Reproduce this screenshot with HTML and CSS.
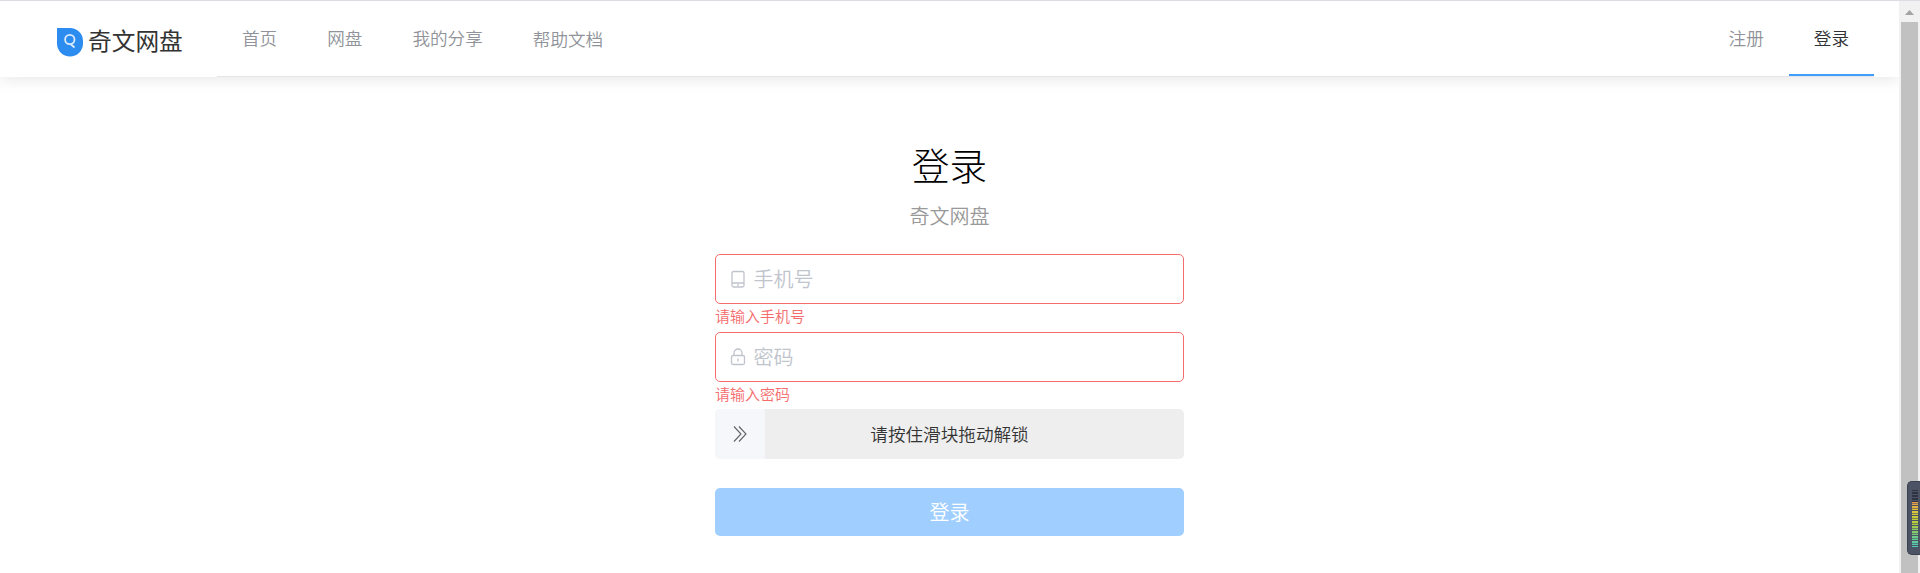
FILE: index.html
```
<!DOCTYPE html>
<html lang="zh-CN">
<head>
<meta charset="utf-8">
<title>奇文网盘</title>
<link rel="stylesheet" href="styles.css">
</head>
<body>
<div class="page">
  <header class="header">
    <div class="logo">
      <svg class="logo-mark" viewBox="0 0 26 29"><path d="M0 0H13A13 13 0 0 1 26 13V15.500A13 13 0 0 1 0 15.500Z" fill="#2d8cf0"/><circle cx="12.800" cy="11.500" r="4.700" fill="none" stroke="#dbeaff" stroke-width="1.800"/><path d="M13.500 16L17.500 19.500" stroke="#dbeaff" stroke-width="1.800"/></svg>
      <span class="logo-text">奇文网盘</span>
    </div>
    <nav class="menu">
      <a class="item">首页</a>
      <a class="item">网盘</a>
      <a class="item">我的分享</a>
      <a class="item item-doc">帮助文档</a>
      <span class="spacer"></span>
      <a class="item">注册</a>
      <a class="item active">登录</a>
    </nav>
  </header>
  <main class="login">
    <h1 class="title">登录</h1>
    <p class="subtitle">奇文网盘</p>
    <div class="field">
      <svg class="icon" viewBox="0 0 16 18"><rect x="2" y="1.500" width="12" height="15.500" rx="1.500"/><path d="M2 13H14M7.200 15H8.800"/></svg>
      <span>手机号</span>
    </div>
    <p class="error">请输入手机号</p>
    <div class="field">
      <svg class="icon" viewBox="0 0 16 18"><rect x="1.500" y="7.500" width="13" height="9" rx="1.500"/><path d="M4 7.500V5A4 4 0 0 1 12 5V7.500M8 10.500V13.500"/></svg>
      <span>密码</span>
    </div>
    <p class="error">请输入密码</p>
    <div class="slider">
      <span class="handle"><svg class="arrows" viewBox="0 0 16 16"><path d="M2 .5L9 8L2 15.500M7 .5L14 8L7 15.500"/></svg></span>
      <span class="slider-text">请按住滑块拖动解锁</span>
    </div>
    <div class="submit">登录</div>
  </main>
</div>
<aside class="scrollbar">
  <svg class="scroll-up" viewBox="0 0 9 5"><path d="M0 5L4.500 0L9 5Z" fill="#a3a3a3"/></svg>
  <div class="thumb"></div>
  <div class="meter"><div class="meter-off"></div><div class="meter-on"></div></div>
</aside>
</body>
</html>
```
FILE: styles.css
```
* { box-sizing: border-box; }
body {
  margin: 0;
  height: 573px;
  overflow: hidden;
  display: flex;
  border-top: 1px solid #dcdce2;
  background: #fff;
  font-family: "Noto Sans CJK SC", sans-serif;
  font-weight: 350;
}
h1, p { margin: 0; font-weight: 350; }
.page { width: 1899px; overflow: hidden; }
.header {
  height: 76px;
  display: flex;
  padding: 0 25px 0 57px;
  box-shadow: 0 2px 15px rgba(0, 0, 0, .1);
}
.logo { width: 160px; display: flex; padding-top: 27px; }
.logo-mark { width: 26px; height: 29px; margin-right: 5px; }
.logo-text { font-size: 23.7px; line-height: 25px; font-weight: 400; color: #333; }
.menu { flex: 1; display: flex; border-bottom: 1px solid #e6e6e6; }
.item {
  height: 75px;
  padding: 0 25px;
  font-size: 17.6px;
  line-height: 73px;
  color: #909399;
}
.item-doc { line-height: 76px; }
.active { color: #303133; border-bottom: 2px solid #409eff; }
.spacer { flex: 1; }
.login { width: 469px; margin: 0 auto; padding-top: 59px; }
.title { font-size: 37.5px; line-height: 56px; text-align: center; color: #000; font-weight: 300; }
.subtitle { height: 62px; padding-top: 9px; font-size: 20px; line-height: 30px; text-align: center; color: #999; }
.field {
  height: 50px;
  display: flex;
  align-items: center;
  gap: 8px;
  padding: 0 13.5px;
  border: 1px solid #f56c6c;
  border-radius: 5px;
  font-size: 20px;
  line-height: 48px;
  color: #c0c4cc;
}
.icon { width: 16px; height: 18px; fill: none; stroke: #c0c4cc; stroke-width: 1.3; }
.error { height: 28px; font-size: 15px; line-height: 23px; color: #f56c6c; }
.slider {
  height: 50px;
  display: grid;
  grid-template-columns: 50px 1fr;
  margin-top: -1px;
  border-radius: 5px;
  overflow: hidden;
  background: #eee;
}
.handle { display: flex; align-items: center; justify-content: center; background: #f5f7fa; }
.arrows { width: 16px; height: 16px; fill: none; stroke: #606266; stroke-width: 1.1; }
.slider-text { padding-right: 50px; text-align: center; font-size: 17.6px; line-height: 50px; color: #333; }
.submit {
  height: 48px;
  margin-top: 29px;
  border-radius: 5px;
  background: #a0cfff;
  color: #fff;
  font-size: 20px;
  line-height: 47px;
  text-align: center;
}
.scrollbar { position: relative; width: 21px; padding: 9px 2px 0; background: #f1f1f1; }
.scroll-up { display: block; width: 9px; height: 5px; margin: 0 auto 7px; }
.thumb { height: 551px; background: #c1c1c1; }
.meter {
  position: absolute;
  right: 0;
  top: 480px;
  width: 13px;
  height: 74px;
  padding: 8px 2px 0 4px;
  border: 1px solid #3b4150;
  border-right: 0;
  border-radius: 5px 0 0 5px;
  background: #4b5364;
}
.meter-off { height: 12px; background: repeating-linear-gradient(#2f3444 0 1px, #4b5364 1px 2px, #2f3444 2px 3px); }
.meter-on {
  height: 45px;
  background: repeating-linear-gradient(transparent 0 1px, rgba(75, 83, 100, .6) 1px 2px, transparent 2px 3px, #4b5364 3px 4px, transparent 4px 5px), linear-gradient(#e69a4c, #dfc43b 20%, #b9d039 45%, #7ccb75 70%, #4dcbb8);
}
```
